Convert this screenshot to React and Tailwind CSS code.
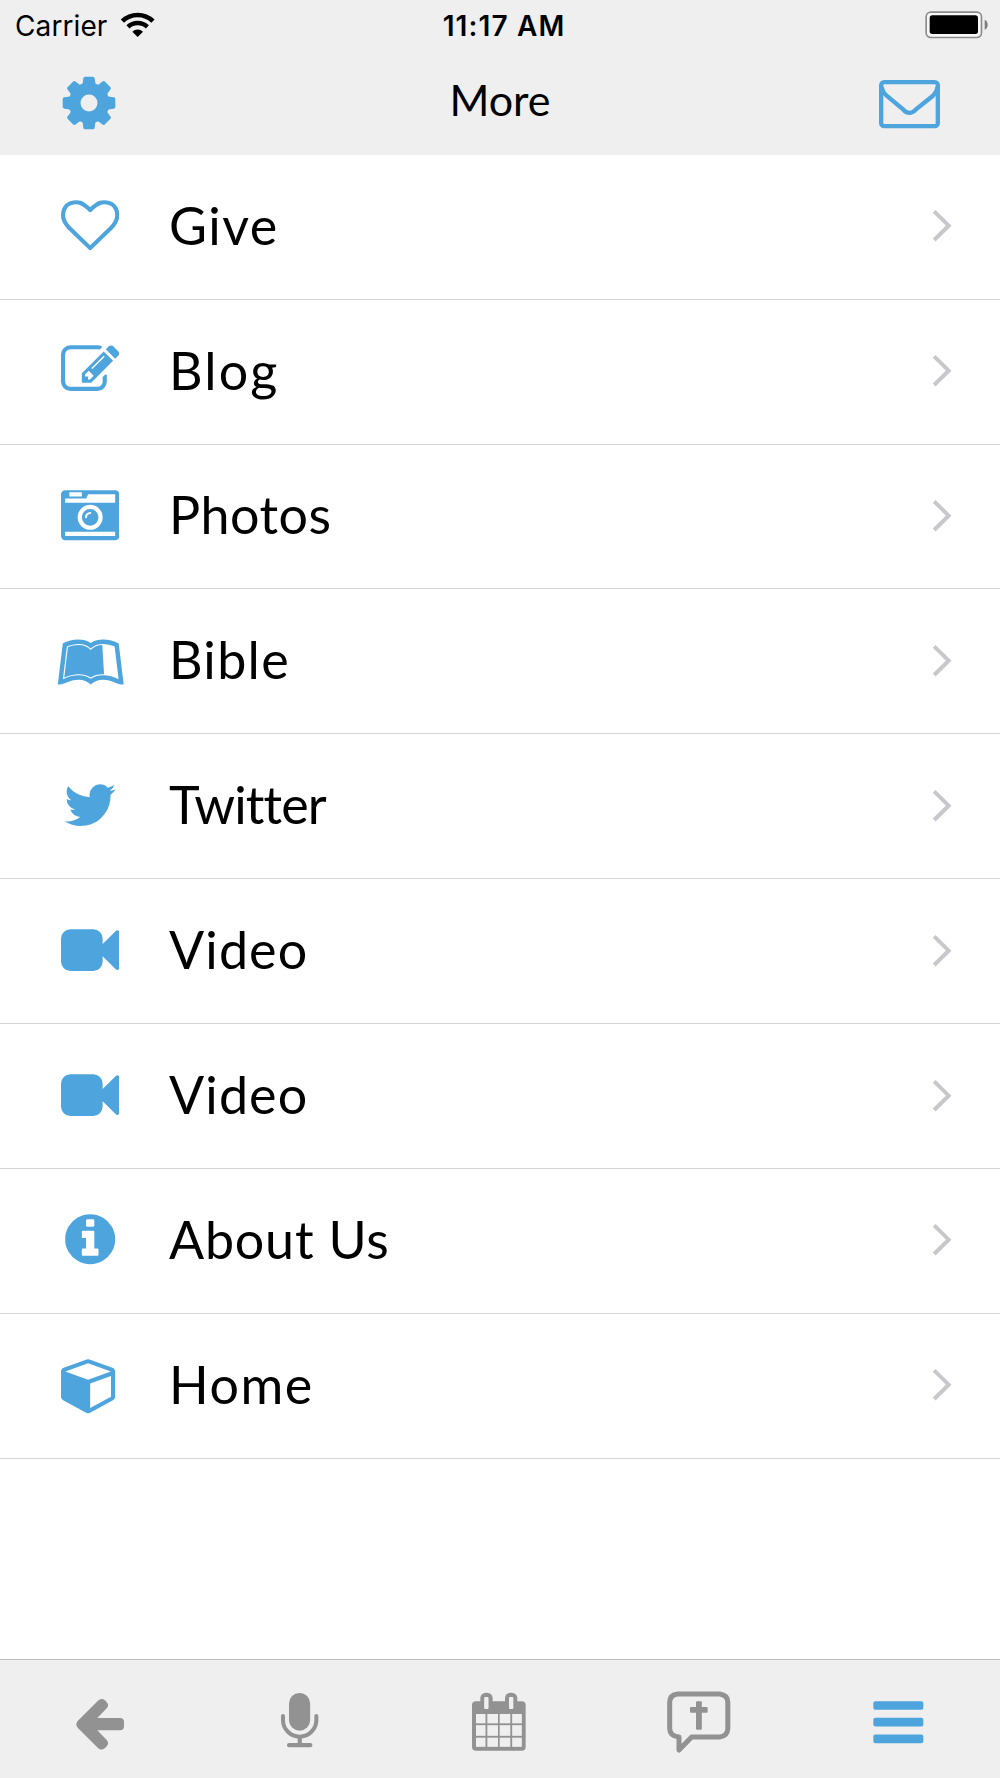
import React from 'react';
import { FaLeanpub } from 'react-icons/fa';

const Glyph = ({ d }) => (
  <svg viewBox="0 0 1792 1792" className="w-[58.33px] h-[58.33px] shrink-0" fill="currentColor">
    <path d={d} />
  </svg>
);

const paths = {
  heart:
    'M1664 596q0-81-21.5-143t-55-98.5-81.5-59.5-94-31-98-8-112 25.5-110.5 64-86.5 72-60 61.5q-18 22-49 22t-49-22q-24-28-60-61.5t-86.5-72-110.5-64-112-25.5-98 8-94 31-81.5 59.5-55 98.5-21.5 143q0 168 187 355l581 560 580-559q188-188 188-356zm128 0q0 221-229 450l-623 600q-18 18-44 18t-44-18l-624-602q-10-8-27.5-26t-55.5-65.5-68-97.5-53.5-121-23.5-138q0-220 127-344t351-124q62 0 126.5 21.5t120 58 95.5 68.5 76 68q36-36 76-68t95.5-68.5 120-58 126.5-21.5q224 0 351 124t127 344z',
  edit:
    'M888 1184l116-116-152-152-116 116v56h96v96h56zm440-720q-16-16-33 1l-350 350q-17 17-1 33t33-1l350-350q17-17 1-33zm80 594v190q0 119-84.5 203.5t-203.5 84.5h-832q-119 0-203.5-84.5t-84.5-203.5v-832q0-119 84.5-203.5t203.5-84.5h832q63 0 117 25 15 7 18 23 3 17-9 29l-49 49q-14 14-32 8-23-6-45-6h-832q-66 0-113 47t-47 113v832q0 66 47 113t113 47h832q66 0 113-47t47-113v-126q0-13 9-22l64-64q15-15 35-7t20 29zm-96-738l288 288-672 672h-288v-288zm444 132l-92 92-288-288 92-92q28-28 68-28t68 28l152 152q28 28 28 68t-28 68z',
  camera:
    'M928 832q0-14-9-23t-23-9q-66 0-113 47t-47 113q0 14 9 23t23 9 23-9 9-23q0-40 28-68t68-28q14 0 23-9t9-23zm224 130q0 106-75 181t-181 75-181-75-75-181 75-181 181-75 181 75 75 181zm-1024 574h1536v-128h-1536v128zm1152-574q0-159-112.5-271.5t-271.5-112.5-271.5 112.5-112.5 271.5 112.5 271.5 271.5 112.5 271.5-112.5 112.5-271.5zm-1024-642h384v-128h-384v128zm-128 192h1536v-256h-828l-64 128h-644v128zm1664-256v1280q0 53-37.5 90.5t-90.5 37.5h-1536q-53 0-90.5-37.5t-37.5-90.5v-1280q0-53 37.5-90.5t90.5-37.5h1536q53 0 90.5 37.5t37.5 90.5z',
  twitter:
    'M1684 408q-67 98-162 167 1 14 1 42 0 130-38 259.5t-115.5 248.5-184.5 210.5-258 146-323 54.5q-271 0-496-145 35 4 78 4 225 0 401-138-105-2-188-64.5t-114-159.5q33 5 61 5 43 0 85-11-112-23-185.5-111.5t-73.5-205.5v-4q68 38 146 41-66-44-105-115t-39-154q0-88 44-163 121 149 294.5 238.5t371.5 99.5q-8-38-8-74 0-134 94.5-228.5t228.5-94.5q140 0 236 102 109-21 205-78-37 115-142 178 93-10 186-50z',
  video:
    'M1792 352v1088q0 42-39 59-13 5-25 5-27 0-45-19l-403-403v166q0 119-84.5 203.5t-203.5 84.5h-704q-119 0-203.5-84.5t-84.5-203.5v-704q0-119 84.5-203.5t203.5-84.5h704q119 0 203.5 84.5t84.5 203.5v165l403-402q18-19 45-19 12 0 25 5 39 17 39 59z',
  info:
    'M1152 1376v-160q0-14-9-23t-23-9h-96v-512q0-14-9-23t-23-9h-320q-14 0-23 9t-9 23v160q0 14 9 23t23 9h96v320h-96q-14 0-23 9t-9 23v160q0 14 9 23t23 9h448q14 0 23-9t9-23zm-128-896v-160q0-14-9-23t-23-9h-192q-14 0-23 9t-9 23v160q0 14 9 23t23 9h192q14 0 23-9t9-23zm640 416q0 209-103 385.5t-279.5 279.5-385.5 103-385.5-103-279.5-279.5-103-385.5 103-385.5 279.5-279.5 385.5-103 385.5 103 279.5 279.5 103 385.5z',
  cube:
    'M896 1629l640-349v-636l-640 233v752zm-64-865l698-254-698-254-698 254zm832-252v768q0 35-18 65t-49 47l-704 384q-28 16-61 16t-61-16l-704-384q-31-17-49-47t-18-65v-768q0-40 23-73t61-47l704-256q22-8 44-8t44 8l704 256q38 14 61 47t23 73z',
};

const items = [
  { label: 'Give', icon: <Glyph d={paths.heart} />, tracking: 'tracking-[1.5px]' },
  { label: 'Blog', icon: <Glyph d={paths.edit} />, tracking: 'tracking-[2.2px]' },
  { label: 'Photos', icon: <Glyph d={paths.camera} />, tracking: 'tracking-[0.5px]' },
  { label: 'Bible', icon: <FaLeanpub className="w-[67.5px] h-[60px] mt-1 ml-px shrink-0" />, tracking: 'tracking-[1.3px]' },
  { label: 'Twitter', icon: <Glyph d={paths.twitter} />, tracking: 'tracking-[-0.9px]' },
  { label: 'Video', icon: <Glyph d={paths.video} />, tracking: 'tracking-[1.1px]' },
  { label: 'Video', icon: <Glyph d={paths.video} />, tracking: 'tracking-[1.1px]' },
  { label: 'About Us', icon: <Glyph d={paths.info} />, tracking: 'tracking-[0.8px]' },
  { label: 'Home', icon: <Glyph d={paths.cube} />, tracking: 'tracking-[1.5px]' },
];

const Wifi = () => (
  <svg viewBox="360 34 108 78" className="w-9 h-[26px]">
    <g fill="none" stroke="#000">
      <path d="M367.2 61.5a66 66 0 0 1 91.6 0" strokeWidth="14" />
      <path d="M383.8 78.7a42 42 0 0 1 58.4 0" strokeWidth="13" />
    </g>
    <path d="M413 109l-16-16a23.500 23.500 0 0 1 32 0z" />
  </svg>
);

const Battery = () => (
  <svg viewBox="222 28 195 90" className="w-[65px] h-[30px]">
    <rect x="228.500" y="34.500" width="166" height="76" rx="14" fill="#f8f8f8" stroke="#8c8c8c" strokeWidth="5" />
    <rect x="239" y="44" width="145" height="56" rx="8" />
    <path d="M404 57q9 4 9 15t-9 15z" fill="#7d7d7d" />
  </svg>
);

const Gear = () => (
  <svg viewBox="-81 -81 162 162" className="w-[54px] h-[54px]" fill="currentColor">
    <circle r="43" fill="none" stroke="currentColor" strokeWidth="35" />
    {[0, 45, 90, 135, 180, 225, 270, 315].map((angle) => (
      <path
        key={angle}
        transform={`rotate(${angle})`}
        d="M-25-53Q-19-56-18.500-62L-17-74Q-16-79-12-79H12Q16-79 17-74L18.500-62Q19-56 25-53L20-45H-20z"
      />
    ))}
  </svg>
);

const Envelope = () => (
  <svg viewBox="84 238 189 151" className="w-[63px] h-[50.33px]" fill="none" stroke="currentColor" strokeWidth="13">
    <rect x="93.500" y="247.500" width="170" height="132" rx="9" />
    <path d="M95 262Q97 277 109 287L160 330Q178 349 197 330L248 289Q261 277 262 262" />
  </svg>
);

const TabIcon = ({ viewBox, children }) => (
  <svg viewBox={viewBox} className="w-[66px] h-[66px]" fill="currentColor">
    {children}
  </svg>
);

const CalendarIcon = () => (
  <TabIcon viewBox="1401 148 198 198">
    <path d="M1428 185h137q12 0 12 12v124q0 12-12 12h-137q-12 0-12-12v-124q0-12 12-12z" />
    <rect x="1441" y="159" width="37" height="60" rx="17" />
    <rect x="1515" y="159" width="37" height="60" rx="17" />
    <g fill="#efefef">
      <rect x="1452.500" y="172" width="13" height="36" rx="3" />
      <rect x="1527" y="172" width="13" height="36" rx="3" />
      {[[223, 28], [256.5, 32], [294, 27.5]].map(([y, h]) => (
        <React.Fragment key={y}>
          <rect x="1428" y={y} width="28.500" height={h} />
          <rect x="1462" y={y} width="32" height={h} />
          <rect x="1499" y={y} width="32" height={h} />
          <rect x="1536.500" y={y} width="29" height={h} />
        </React.Fragment>
      ))}
    </g>
  </TabIcon>
);

const tabs = [
  {
    name: 'back',
    icon: (
      <TabIcon viewBox="201 148 198 198">
        <path d="M233 244L294 183Q304 174 315 182L319 186Q329 196 320 206L292 235H360Q372 235 372 247V260Q372 272 360 272H292L320 301Q329 311 319 321L315 325Q304 334 294 325L233 264Q225 254 233 244z" />
      </TabIcon>
    ),
  },
  {
    name: 'mic',
    icon: (
      <TabIcon viewBox="801 148 198 198">
        <rect x="867" y="160" width="63.500" height="113" rx="31.500" />
        <path d="M849 229v12a50 50 0 0 0 100 0v-12" fill="none" stroke="currentColor" strokeWidth="12" strokeLinecap="round" />
        <rect x="893" y="290" width="12.500" height="24" />
        <rect x="861" y="310" width="76" height="13" rx="6" />
      </TabIcon>
    ),
  },
  { name: 'calendar', icon: <CalendarIcon /> },
  {
    name: 'prayer',
    icon: (
      <TabIcon viewBox="501 148 198 198">
        <path
          d="M533 163H659Q683 166 683.500 188V267Q682 290 659 292H575L537 331V292Q510 290 509 267V188Q510 165 533 163z"
          fill="none"
          stroke="currentColor"
          strokeWidth="15"
          strokeLinejoin="round"
        />
        <rect x="588" y="185" width="17.500" height="85" rx="3" />
        <rect x="570" y="202" width="53" height="17" rx="3" />
      </TabIcon>
    ),
  },
  {
    name: 'more',
    active: true,
    icon: (
      <TabIcon viewBox="1101 148 198 198">
        <rect x="1120" y="184.500" width="150" height="26" rx="6" />
        <rect x="1120" y="234.500" width="150" height="26" rx="6" />
        <rect x="1120" y="284.500" width="150" height="26" rx="6" />
      </TabIcon>
    ),
  },
];

const Row = ({ label, icon, tracking }) => (
  <li className="flex items-center h-[144.93px] border-b border-[#d4d4d6]">
    <div className="w-[180px] flex justify-center pb-[3px] shrink-0 text-[#4ea5dd]">{icon}</div>
    <span className={`flex-1 -ml-[11px] pb-1 text-[52px] leading-none ${tracking}`}>{label}</span>
    <svg viewBox="246 628 60 100" className="w-5 h-[33.33px] mr-12 mb-[2px]" fill="none" stroke="#c7c7cc" strokeWidth="12">
      <path d="M252.500 635L296 678L252.500 721" />
    </svg>
  </li>
);

export default function App() {
  return (
    <div className="w-full h-[1778px] flex flex-col bg-white text-black font-['Lato',sans-serif] overflow-hidden">
      <header className="h-[154.7px] shrink-0 bg-[#efefef]">
        <div className="h-[50px] grid grid-cols-3 items-center pl-[15px] pr-[11px] font-['Inter',sans-serif]">
          <div className="flex items-center gap-[13px]">
            <span className="pt-px text-[28px] tracking-[0.1px]">Carrier</span>
            <Wifi />
          </div>
          <span className="pt-px pl-1 text-center text-[28px] font-semibold tracking-[1.1px]">11:17 AM</span>
          <div className="flex justify-end">
            <Battery />
          </div>
        </div>
        <div className="h-[105px] flex justify-between items-center pl-[62px] pr-[59px]">
          <div className="w-[60px] text-[#4ea5dd]">
            <Gear />
          </div>
          <h1 className="pb-[6px] text-[43px] leading-none">More</h1>
          <div className="pt-[3px] text-[#4ea5dd]">
            <Envelope />
          </div>
        </div>
      </header>

      <ul className="flex-1">
        {items.map((item, i) => (
          <Row key={i} {...item} />
        ))}
      </ul>

      <nav className="h-[119px] shrink-0 grid grid-cols-5 bg-[#efefef] border-t border-[#bdbdbd] pt-[29px]">
        {tabs.map((tab) => (
          <div key={tab.name} className={`flex justify-center ${tab.active ? 'text-[#4ea5dd]' : 'text-[#929292]'}`}>
            {tab.icon}
          </div>
        ))}
      </nav>
    </div>
  );
}
